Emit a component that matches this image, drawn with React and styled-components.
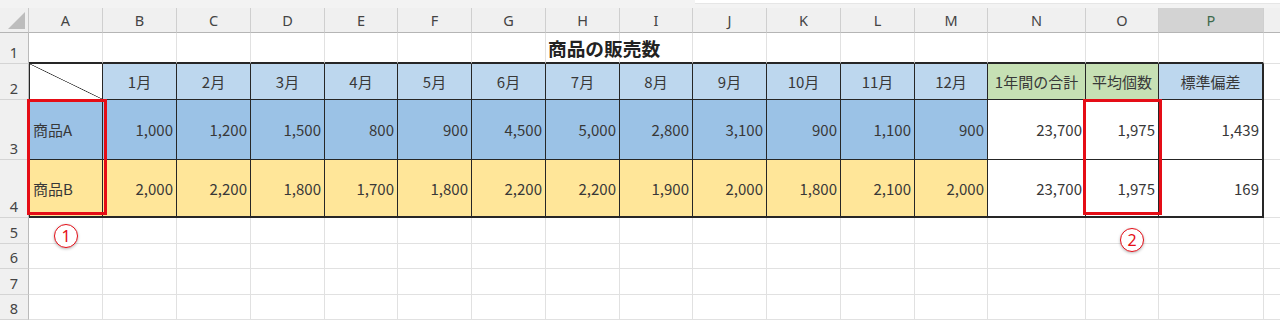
import React from 'react'
import styled, { createGlobalStyle } from 'styled-components'

const GlobalStyle = createGlobalStyle`
  html, body {
    margin: 0;
    padding: 0;
    background: #fff;
    overflow: hidden;
  }
  body {
    width: 1280px;
    height: 321px;
    font-family: "Noto Sans CJK JP", "Noto Sans", sans-serif;
  }
`

// column widths as in the sheet (row header first, Q is cut by the window)
const COLUMNS = [
  ['A', 74], ['B', 74], ['C', 74], ['D', 74], ['E', 73], ['F', 74], ['G', 74], ['H', 74],
  ['I', 73], ['J', 74], ['K', 74], ['L', 74], ['M', 73], ['N', 98], ['O', 73], ['P', 105], ['Q', 80]
]
const TEMPLATE = `29px ${COLUMNS.map(c => c[1] + 'px').join(' ')}`

const MONTHS = ['1月', '2月', '3月', '4月', '5月', '6月', '7月', '8月', '9月', '10月', '11月', '12月']

const PRODUCTS = [
  {
    name: '商品A',
    bg: '#9bc2e6',
    values: ['1,000', '1,200', '1,500', '800', '900', '4,500', '5,000', '2,800', '3,100', '900', '1,100', '900'],
    total: '23,700',
    avg: '1,975',
    sd: '1,439'
  },
  {
    name: '商品B',
    bg: '#ffe699',
    values: ['2,000', '2,200', '1,800', '1,700', '1,800', '2,200', '2,200', '1,900', '2,000', '1,800', '2,100', '2,000'],
    total: '23,700',
    avg: '1,975',
    sd: '169'
  }
]

const INK = '#262626'
const GRID = '#e1e1e1'
const RED = '#e50d16'

const Page = styled.div`
  position: relative;
  width: 1280px;
  height: 321px;
  overflow: hidden;
  background: #fff;
`

const TopStrip = styled.div`
  display: flex;
  height: 8px;
  background: #f3f3f3;
`

const StripGap = styled.div`
  flex: 0 0 695px;
`

const StripWhite = styled.div`
  flex: 1;
  height: 3px;
  background: #fff;
  border-bottom: 1px solid #e6e6e6;
`

const Sheet = styled.div`
  display: flex;
  flex-direction: column;
  width: 1344px;
  color: #383838;
`

const Row = styled.div`
  display: grid;
  grid-template-columns: ${TEMPLATE};
  height: ${p => p.$h}px;
`

const Corner = styled.div`
  position: relative;
  box-sizing: border-box;
  background: #f0f0f0;
  border-right: 1px solid #c9c9c9;
  border-bottom: 1px solid #b5b5b5;

  &::after {
    content: '';
    position: absolute;
    right: 3px;
    bottom: 3px;
    width: 17px;
    height: 17px;
    background: #bdbdbd;
    clip-path: polygon(100% 0, 100% 100%, 0 100%);
  }
`

const ColHead = styled.div`
  display: flex;
  align-items: center;
  justify-content: center;
  box-sizing: border-box;
  font-family: "Noto Sans", "Liberation Sans", sans-serif;
  font-size: 14.5px;
  color: ${p => (p.$active ? '#3e6a4c' : '#444')};
  background: ${p => (p.$active ? '#d3d3d3' : '#f0f0f0')};
  border-right: 1px solid #cfcfcf;
  border-bottom: 1px solid #b5b5b5;
`

const RowHead = styled.div`
  display: flex;
  align-items: flex-end;
  justify-content: center;
  box-sizing: border-box;
  padding-bottom: 4px;
  font-family: "Noto Sans", "Liberation Sans", sans-serif;
  font-size: 14.5px;
  line-height: 1;
  color: #444;
  background: #f0f0f0;
  border-right: 1px solid #bababa;
  border-bottom: 1px solid #d4d4d4;
`

const Cell = styled.div`
  box-sizing: border-box;
  min-width: 0;
  border-right: 1px solid ${GRID};
  border-bottom: ${p => (p.$edge ? `2px solid ${INK}` : `1px solid ${GRID}`)};
`

const TitleCell = styled(Cell)`
  display: flex;
  align-items: center;
  padding: 0 0 1px 2px;
  white-space: nowrap;
  overflow: visible;
  font-size: 18.7px;
  font-weight: 700;
  color: #222;
`

const DataCell = styled.div`
  display: flex;
  align-items: center;
  justify-content: ${p => (p.$align === 'left' ? 'flex-start' : p.$align === 'right' ? 'flex-end' : 'center')};
  box-sizing: border-box;
  min-width: 0;
  padding: ${p => (p.$align === 'left' ? '0 0 0 3px' : p.$align === 'right' ? '0 3px 0 0' : '0')};
  overflow: hidden;
  white-space: nowrap;
  font-size: 15px;
  background: ${p => p.$bg || '#fff'};
  border-left: ${p => (p.$left ? `1px solid ${INK}` : '0')};
  border-right: ${p => (p.$right ? 2 : 1)}px solid ${INK};
  border-bottom: ${p => (p.$bottom ? 2 : 1)}px solid ${INK};
`

const Diagonal = styled(DataCell)`
  background: linear-gradient(
    to top right,
    #fff calc(50% - 0.7px),
    #333 50%,
    #fff calc(50% + 0.7px)
  );
`

const Marker = styled.div`
  position: absolute;
  left: ${p => p.$x}px;
  top: ${p => p.$y}px;
  width: ${p => p.$w}px;
  height: ${p => p.$h}px;
  box-sizing: border-box;
  border: 3px solid ${RED};
  pointer-events: none;
`

const Badge = styled.div`
  position: absolute;
  left: ${p => p.$x - 12}px;
  top: ${p => p.$y - 12}px;
  width: 24px;
  height: 24px;
  box-sizing: border-box;
  border-radius: 50%;
  border: 1.5px solid ${RED};
  background: #fff;
  box-shadow: 0 1px 3px rgba(0, 0, 0, 0.28);
  display: flex;
  align-items: center;
  justify-content: center;
  font-family: "Noto Sans", sans-serif;
  font-size: 16px;
  line-height: 1;
  color: ${RED};
`

function Blank({ from = 0, to = COLUMNS.length, edge }) {
  return COLUMNS.slice(from, to).map(([key]) => <Cell key={key} $edge={edge && key !== 'Q'} />)
}

export default function App() {
  return (
    <>
      <GlobalStyle />
      <Page>
        <TopStrip>
          <StripGap />
          <StripWhite />
        </TopStrip>
        <Sheet>
          <Row $h={25}>
            <Corner />
            {COLUMNS.map(([key]) => (
              <ColHead key={key} $active={key === 'P'}>{key === 'Q' ? '' : key}</ColHead>
            ))}
          </Row>

          <Row $h={31}>
            <RowHead>1</RowHead>
            <Blank to={7} edge />
            <TitleCell $edge>商品の販売数</TitleCell>
            <Blank from={8} edge />
          </Row>

          <Row $h={36}>
            <RowHead>2</RowHead>
            <Diagonal $left />
            {MONTHS.map(m => (
              <DataCell key={m} $bg="#bdd7ee">{m}</DataCell>
            ))}
            <DataCell $bg="#c6e0b4">1年間の合計</DataCell>
            <DataCell $bg="#c6e0b4">平均個数</DataCell>
            <DataCell $right $bg="#bdd7ee">標準偏差</DataCell>
            <Cell />
          </Row>

          {PRODUCTS.map((p, i) => {
            const last = i === PRODUCTS.length - 1
            return (
              <Row key={p.name} $h={i === 0 ? 60 : 58}>
                <RowHead>{3 + i}</RowHead>
                <DataCell $left $bottom={last} $align="left" $bg={p.bg}>{p.name}</DataCell>
                {p.values.map((v, j) => (
                  <DataCell key={j} $bottom={last} $align="right" $bg={p.bg}>{v}</DataCell>
                ))}
                <DataCell $bottom={last} $align="right">{p.total}</DataCell>
                <DataCell $bottom={last} $align="right">{p.avg}</DataCell>
                <DataCell $bottom={last} $right $align="right">{p.sd}</DataCell>
                <Cell />
              </Row>
            )
          })}

          {[[5, 26], [6, 25], [7, 26], [8, 25]].map(([n, h]) => (
            <Row key={n} $h={h}>
              <RowHead>{n}</RowHead>
              <Blank />
            </Row>
          ))}
        </Sheet>
        <Marker $x={27} $y={99} $w={80} $h={116} />
        <Marker $x={1083} $y={99} $w={79} $h={116} />
        <Badge $x={66} $y={236}>1</Badge>
        <Badge $x={1132} $y={240}>2</Badge>
      </Page>
    </>
  )
}
